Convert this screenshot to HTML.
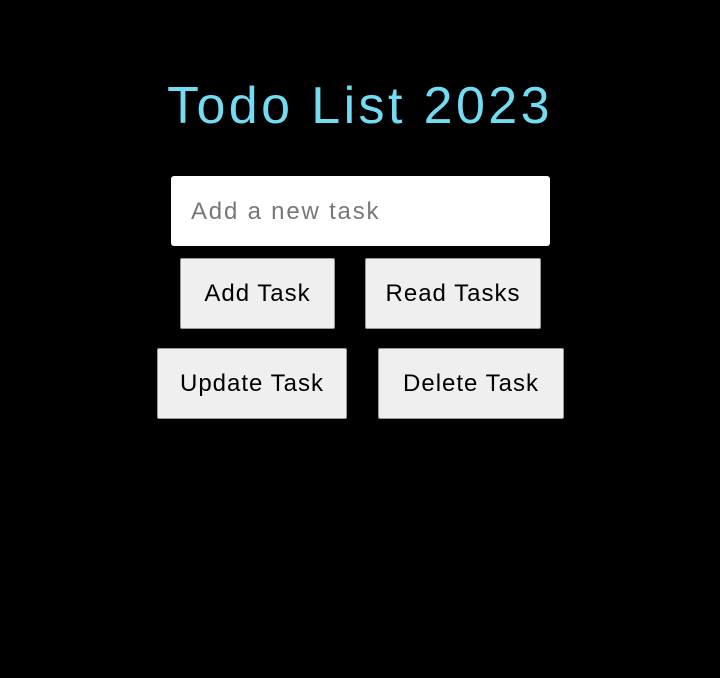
<!DOCTYPE html>
<html><head><style>
html,body{margin:0;padding:0;background:#000;width:720px;height:678px;overflow:hidden;font-family:"Liberation Sans",sans-serif;}
.t{position:absolute;left:0;width:720px;top:74px;text-align:center;color:#72dcf2;font-size:52px;line-height:64px;letter-spacing:3.4px;}
.in{position:absolute;left:171px;top:176px;width:379px;height:70px;background:#fff;border-radius:3px;box-sizing:border-box;}
.in span{position:absolute;left:20px;top:22px;font-size:24px;color:#777;line-height:28px;letter-spacing:1.8px;}
.b{position:absolute;background:#efefef;border:1px solid #999;border-radius:2px;box-sizing:border-box;height:71px;font-size:24px;line-height:69px;text-align:center;color:#000;letter-spacing:1px;}
</style></head><body>
<div class="t">Todo List 2023</div>
<div class="in"><span>Add a new task</span></div>
<div class="b" style="left:180px;top:258px;width:155px">Add Task</div>
<div class="b" style="left:365px;top:258px;width:176px">Read Tasks</div>
<div class="b" style="left:157px;top:348px;width:190px">Update Task</div>
<div class="b" style="left:378px;top:348px;width:186px">Delete Task</div>
</body></html>
